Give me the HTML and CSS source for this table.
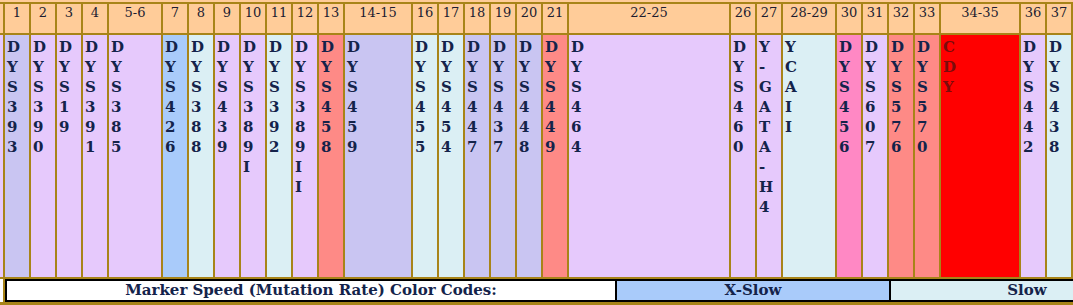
FILE: index.html
```html
<!DOCTYPE html>
<html lang="en">
<head>
<meta charset="utf-8">
<title>Y-DNA Marker Chart</title>
<link rel="stylesheet" href="styles.css">
</head>
<body>
<div class="chart">
  <div class="strip"></div>

  <div class="hd"></div>
  <div class="hd">1</div>
  <div class="hd">2</div>
  <div class="hd">3</div>
  <div class="hd">4</div>
  <div class="hd">5-6</div>
  <div class="hd">7</div>
  <div class="hd">8</div>
  <div class="hd">9</div>
  <div class="hd">10</div>
  <div class="hd">11</div>
  <div class="hd">12</div>
  <div class="hd">13</div>
  <div class="hd">14-15</div>
  <div class="hd">16</div>
  <div class="hd">17</div>
  <div class="hd">18</div>
  <div class="hd">19</div>
  <div class="hd">20</div>
  <div class="hd">21</div>
  <div class="hd">22-25</div>
  <div class="hd">26</div>
  <div class="hd">27</div>
  <div class="hd">28-29</div>
  <div class="hd">30</div>
  <div class="hd">31</div>
  <div class="hd">32</div>
  <div class="hd">33</div>
  <div class="hd">34-35</div>
  <div class="hd">36</div>
  <div class="hd">37</div>
  <div class="hd"></div>

  <div class="mk lav"></div>
  <div class="mk med">D<br>Y<br>S<br>3<br>9<br>3</div>
  <div class="mk lav">D<br>Y<br>S<br>3<br>9<br>0</div>
  <div class="mk lav">D<br>Y<br>S<br>1<br>9</div>
  <div class="mk lav">D<br>Y<br>S<br>3<br>9<br>1</div>
  <div class="mk lav">D<br>Y<br>S<br>3<br>8<br>5</div>
  <div class="mk xslow">D<br>Y<br>S<br>4<br>2<br>6</div>
  <div class="mk slow">D<br>Y<br>S<br>3<br>8<br>8</div>
  <div class="mk lav">D<br>Y<br>S<br>4<br>3<br>9</div>
  <div class="mk lav">D<br>Y<br>S<br>3<br>8<br>9<br>I</div>
  <div class="mk slow">D<br>Y<br>S<br>3<br>9<br>2</div>
  <div class="mk lav">D<br>Y<br>S<br>3<br>8<br>9<br>I<br>I</div>
  <div class="mk salmon">D<br>Y<br>S<br>4<br>5<br>8</div>
  <div class="mk med">D<br>Y<br>S<br>4<br>5<br>9</div>
  <div class="mk slow">D<br>Y<br>S<br>4<br>5<br>5</div>
  <div class="mk slow">D<br>Y<br>S<br>4<br>5<br>4</div>
  <div class="mk med">D<br>Y<br>S<br>4<br>4<br>7</div>
  <div class="mk med">D<br>Y<br>S<br>4<br>3<br>7</div>
  <div class="mk med">D<br>Y<br>S<br>4<br>4<br>8</div>
  <div class="mk salmon">D<br>Y<br>S<br>4<br>4<br>9</div>
  <div class="mk lav">D<br>Y<br>S<br>4<br>6<br>4</div>
  <div class="mk lav">D<br>Y<br>S<br>4<br>6<br>0</div>
  <div class="mk lav">Y<br>-<br>G<br>A<br>T<br>A<br>-<br>H<br>4</div>
  <div class="mk slow">Y<br>C<br>A<br>I<br>I</div>
  <div class="mk pink">D<br>Y<br>S<br>4<br>5<br>6</div>
  <div class="mk lav">D<br>Y<br>S<br>6<br>0<br>7</div>
  <div class="mk salmon">D<br>Y<br>S<br>5<br>7<br>6</div>
  <div class="mk salmon">D<br>Y<br>S<br>5<br>7<br>0</div>
  <div class="mk red">C<br>D<br>Y</div>
  <div class="mk lav">D<br>Y<br>S<br>4<br>4<br>2</div>
  <div class="mk slow">D<br>Y<br>S<br>4<br>3<br>8</div>
  <div class="mk lav"></div>

  <div class="edge"></div>
  <div class="legend">
    <div class="key key-title">Marker Speed (Mutation Rate) Color Codes:</div>
    <div class="key xslow">X-Slow</div>
    <div class="key slow">Slow</div>
  </div>
</div>
</body>
</html>
```
FILE: styles.css
```css
html, body {
  margin: 0;
  padding: 0;
  overflow: hidden;
}

body {
  width: 1073px;
  height: 305px;
  background: #a88418;
}

.chart {
  display: grid;
  width: max-content;
  grid-template-columns:
    3px repeat(4, 24px) 52px repeat(7, 24px) 66px repeat(6, 24px)
    160px 24px 24px 52px repeat(4, 24px) 78px 24px 24px 300px;
  grid-template-rows: 2px 29px 242px 23px 10px;
  gap: 2px;
  background: #a88418;
  font-family: "DejaVu Serif", "Liberation Serif", serif;
}

.strip {
  grid-column: 1 / -1;
  background: #ffcc99;
}

.hd {
  background: #ffcc99;
  color: #1c1c30;
  font-size: 13px;
  line-height: 16px;
  padding-top: 1px;
  text-align: center;
}

.mk {
  color: #14234a;
  font-size: 15px;
  font-weight: bold;
  line-height: 20px;
  padding: 2px 0 0 2px;
}

.med { background: #c9c5f2; }
.lav { background: #e6c9fc; }
.xslow { background: #a9cbfa; }
.slow { background: #dbeff4; }
.salmon { background: #fe8a86; }
.pink { background: #ff88c4; }
.red { background: #ff0000; color: #7a0c0c; }

.edge {
  background: #ffffff;
}

.legend {
  grid-column: 2 / -1;
  display: flex;
  border: 2px solid #000000;
  background: #ffffff;
}

.key {
  flex: 0 0 auto;
  width: 272px;
  border-left: 2px solid #000000;
  color: #14234a;
  font-size: 15px;
  font-weight: bold;
  line-height: 19px;
  text-align: center;
}

.key-title {
  width: 608px;
  border-left: 0;
  background: #ffffff;
}
```
